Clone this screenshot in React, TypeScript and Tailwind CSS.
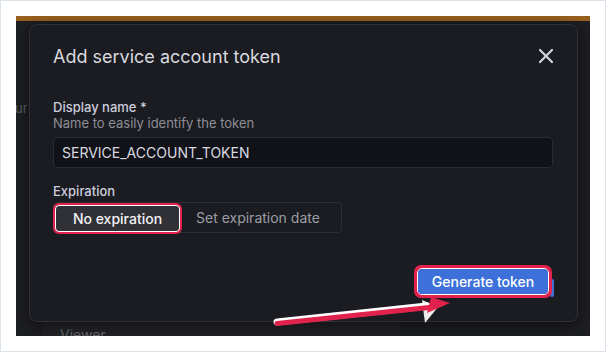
import React from "react";
import { X } from "lucide-react";

export default function App() {
  return (
    <div className="relative w-[606px] h-[352px] bg-white border border-[#dde3ea] p-[15px] font-['Inter',sans-serif]">
      <div className="relative w-[574px] h-[320px] bg-[#1e1f23] overflow-hidden flex flex-col">
        <div className="h-[5px] bg-[#9a611e] shrink-0" />
        {/* background page content (dimmed) */}
        <div className="flex-1 flex flex-col">
          <div className="mt-[79px] -ml-[1px] text-[13px] leading-[16px] text-[#5f6066]">ur</div>
          <div className="mt-auto ml-[27px] w-[357px] h-[14px] bg-[#232428] pl-[17px] pt-[5px] text-[14px] leading-[16px] text-[#6a6b71]">
            Viewer
          </div>
        </div>

        {/* modal */}
        <div className="absolute left-[13px] top-[8px] w-[549px] h-[298px] rounded-[8px] border border-[#2f3137] bg-[#1b1c21] shadow-[0_4px_18px_rgba(0,0,0,0.55)] flex flex-col">
          <div className="flex items-start justify-between pl-[23px] pr-[19px] pt-[19px]">
            <h2 className="mt-[1px] text-[18px] leading-[24px] text-[#d8d9de] font-normal">Add service account token</h2>
            <X size={24} strokeWidth={2.2} className="text-[#d4d5da] mt-[0px]" />
          </div>

          <div className="pl-[23px] pr-[24px] mt-[30px] flex flex-col">
            <div className="text-[13px] leading-[16px] font-medium text-[#ccccdc]">Display name *</div>
            <div className="text-[13px] leading-[16px] text-[#8d8e96]">Name to easily identify the token</div>
            <div className="mt-[6px] w-[500px] h-[31px] rounded-[4px] border border-[#2a2c31] bg-[#111217] flex items-center pl-[8px] text-[14px] text-[#d9dae0]">
              SERVICE_ACCOUNT_TOKEN
            </div>

            <div className="mt-[15px] text-[13px] leading-[16px] font-medium text-[#ccccdc]">Expiration</div>
            <div className="mt-[3px] w-[289px] h-[31px] rounded-[4px] border border-[#2c2e33] flex items-start">
              <div className="-ml-[1px] h-[31px] w-[129px] rounded-[6px] bg-[#e0224c] p-[2px]">
                <div className="h-full w-full rounded-[4px] border-[1.5px] border-white bg-[#303136] flex items-center justify-center text-[14px] font-medium text-[#f2f2f5]">
                  No expiration
                </div>
              </div>
              <div className="h-full flex items-center pl-[14px] text-[14px] text-[#9b9ca3]">Set expiration date</div>
            </div>
          </div>

          <div className="mt-[32px] flex justify-end pr-[25px]">
            <div className="relative">
              <div className="absolute -right-[2px] top-[14px] h-[18px] w-[4px] rounded-[2px] bg-[#3d71d9]" />
              <div className="relative rounded-[7px] bg-[#e0224c] p-[3px]">
                <div className="rounded-[5px] border border-white">
                  <button className="w-[130px] h-[25px] rounded-[4px] bg-[#3d71d9] text-white text-[14px] font-medium flex items-center justify-center">
                    Generate token
                  </button>
                </div>
              </div>
            </div>
          </div>
        </div>
      </div>

      {/* annotation arrow */}
      <svg className="absolute left-0 top-0 pointer-events-none" width="606" height="352" viewBox="0 0 606 352">
        <polygon points="421,299 437,306 424,322" fill="#ececec" />
        <line x1="276" y1="321" x2="426" y2="305" stroke="#ffffff" strokeWidth="7" strokeLinecap="round" />
        <line x1="276" y1="322.5" x2="428" y2="306.5" stroke="#e0224c" strokeWidth="5" strokeLinecap="round" />
        <polygon points="430,296 449,302 426,312" fill="#e0224c" />
      </svg>
    </div>
  );
}
